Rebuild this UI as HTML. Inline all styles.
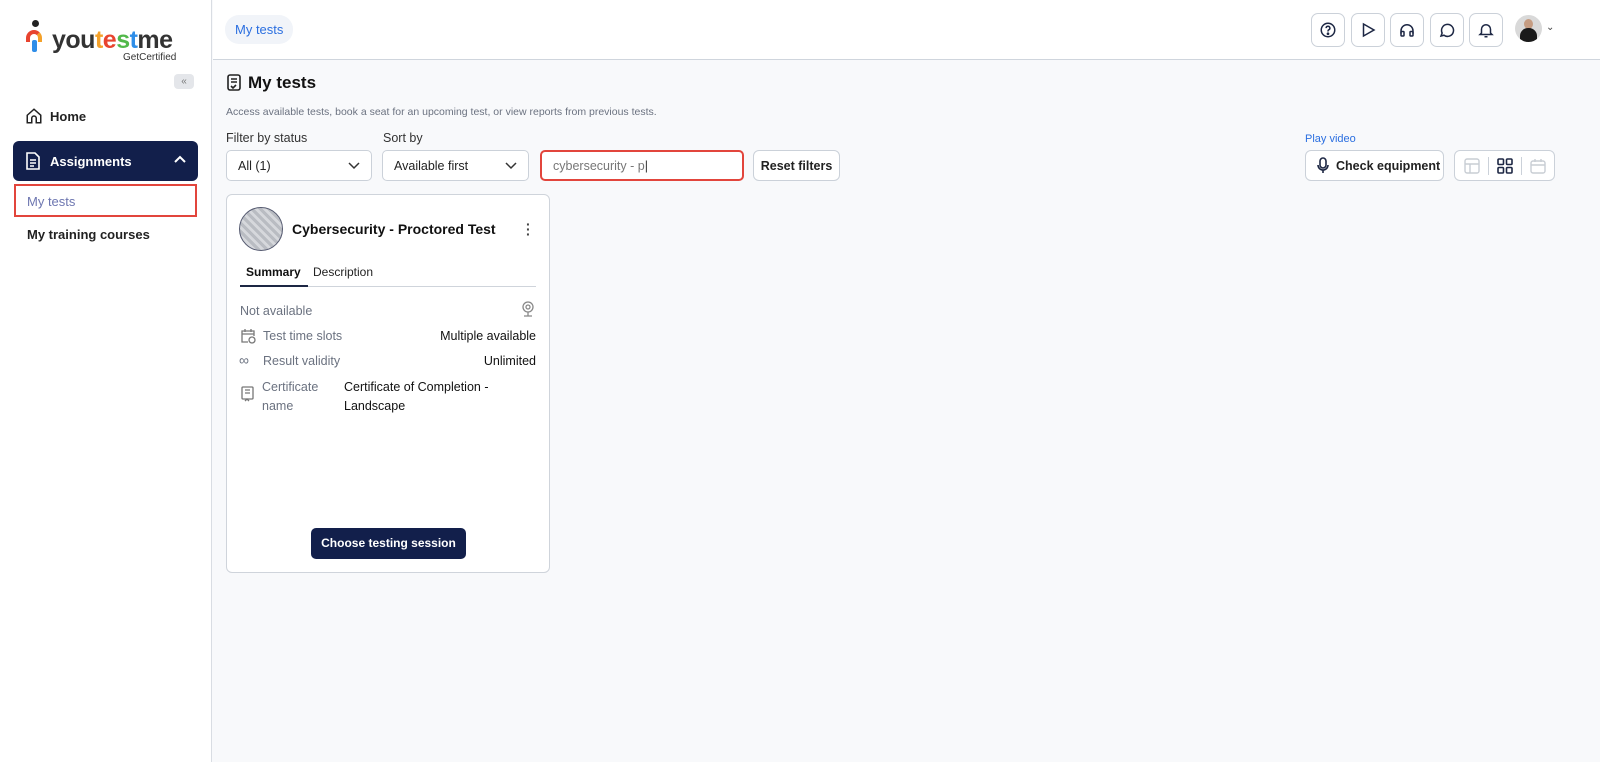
<!DOCTYPE html>
<html><head><meta charset="utf-8"><style>
*{box-sizing:border-box;margin:0;padding:0}
body{width:1600px;height:762px;overflow:hidden;font-family:"Liberation Sans",sans-serif;background:#f8f9fb;color:#111;position:relative}
.side{position:absolute;left:0;top:0;width:212px;height:762px;background:#fff;border-right:1px solid #d9dde3}
.top{position:absolute;left:213px;top:0;right:0;height:60px;background:#fff;border-bottom:1px solid #cfd5dd}
.abs{position:absolute;white-space:nowrap}
.btn{position:absolute;background:#fff;border:1px solid #cbd1d9;border-radius:6px;display:flex;align-items:center;font-size:12.5px;font-weight:bold;color:#222;white-space:nowrap}
.ib{position:absolute;top:13px;width:34px;height:34px;border:1px solid #cbd1d9;border-radius:7px;background:#fff;display:flex;align-items:center;justify-content:center}
svg{display:block}
.lbl{font-size:12.5px;color:#333}
.sel{position:absolute;top:150px;height:31px;background:#fff;border:1px solid #cbd1d9;border-radius:5px;font-size:12.5px;padding:0 11px;display:flex;align-items:center;justify-content:space-between;color:#222;white-space:nowrap}
.row{position:absolute;font-size:12.5px;white-space:nowrap}
.g{color:#6b7280}
</style></head><body>
<div class="side">
  <div class="abs" style="left:26px;top:20px;width:20px;height:30px">
    <div class="abs" style="left:6px;top:0;width:7px;height:7px;border-radius:50%;background:#222"></div>
    <div class="abs" style="left:0;top:10px;width:16px;height:12px;border:4px solid #e8442f;border-bottom:none;border-radius:8px 8px 0 0;border-right-color:#f4a12a"></div>
    <div class="abs" style="left:6px;top:20px;width:5px;height:12px;background:#2f8ee8;border-radius:2px"></div>
  </div>
  <div class="abs" style="left:52px;top:26px;font-size:25px;font-weight:bold;letter-spacing:-0.5px;color:#333">you<span style="color:#f4a12a">t</span><span style="color:#e8442f">e</span><span style="color:#52b84a">s</span><span style="color:#2f8ee8">t</span>me</div>
  <div class="abs" style="left:123px;top:52px;font-size:10px;color:#333">GetCertified</div>
  <div class="abs" style="left:174px;top:74px;width:20px;height:15px;background:#e4e6ea;border-radius:4px;font-size:10px;color:#777;text-align:center;line-height:15px">«</div>
  <svg class="abs" style="left:25px;top:107px" width="18" height="18" viewBox="0 0 24 24" fill="none" stroke="#222" stroke-width="2"><path d="M3 11l9-8 9 8v10h-6v-6a3 3 0 0 0-6 0v6H3z"/></svg>
  <div class="abs" style="left:50px;top:109px;font-size:13px;font-weight:bold;color:#222">Home</div>
  <div class="abs" style="left:13px;top:141px;width:185px;height:40px;background:#121f4b;border-radius:6px">
    <svg class="abs" style="left:12px;top:11px" width="16" height="18" viewBox="0 0 16 18" fill="none" stroke="#fff" stroke-width="1.6"><path d="M2 1h8l4 4v12H2z M5 8h6 M5 11h6 M5 14h4"/></svg>
    <div class="abs" style="left:37px;top:13px;font-size:13px;font-weight:bold;color:#fff">Assignments</div>
    <svg class="abs" style="left:161px;top:14px" width="12" height="10" viewBox="0 0 12 10" fill="none" stroke="#fff" stroke-width="2"><path d="M1 7l5-5 5 5"/></svg>
  </div>
  <div class="abs" style="left:14px;top:184px;width:183px;height:33px;border:2px solid #e2453c"></div>
  <div class="abs" style="left:27px;top:194px;font-size:13px;color:#6d76b0">My tests</div>
  <div class="abs" style="left:27px;top:227px;font-size:13px;font-weight:bold;color:#222">My training courses</div>
</div>
<div class="top">
  <div class="abs" style="left:12px;top:15px;height:29px;padding:0 10px;background:#f1f4f9;border-radius:14px;font-size:13px;color:#2b6fe0;line-height:29px">My tests</div>
  <div class="ib" style="left:1098px"><svg width="18" height="18" viewBox="0 0 24 24" fill="none" stroke="#1d2744" stroke-width="2"><circle cx="12" cy="12" r="9"/><path d="M9.5 9.5a2.5 2.5 0 1 1 3.5 2.3c-.6.3-1 .8-1 1.5V14"/><circle cx="12" cy="17" r=".8" fill="#1d2744"/></svg></div>
  <div class="ib" style="left:1138px"><svg width="18" height="18" viewBox="0 0 24 24" fill="none" stroke="#1d2744" stroke-width="2"><path d="M6 4l14 8-14 8z"/></svg></div>
  <div class="ib" style="left:1177px"><svg width="18" height="18" viewBox="0 0 24 24" fill="none" stroke="#1d2744" stroke-width="2"><path d="M4 17v-4a8 8 0 0 1 16 0v4"/><rect x="4" y="14" width="4" height="6" rx="1"/><rect x="16" y="14" width="4" height="6" rx="1"/></svg></div>
  <div class="ib" style="left:1217px"><svg width="18" height="18" viewBox="0 0 24 24" fill="none" stroke="#1d2744" stroke-width="2"><path d="M4 20l1.5-4A8 8 0 1 1 8 19z"/></svg></div>
  <div class="ib" style="left:1256px"><svg width="18" height="18" viewBox="0 0 24 24" fill="none" stroke="#1d2744" stroke-width="2"><path d="M6 16V11a6 6 0 0 1 12 0v5l2 2H4z M10 21h4"/></svg></div>
  <div class="abs" style="left:1302px;top:15px;width:27px;height:27px;border-radius:50%;overflow:hidden;background:#d9d9d9">
    <div class="abs" style="left:9px;top:4px;width:9px;height:10px;border-radius:50%;background:#c59c82"></div>
    <div class="abs" style="left:5px;top:13px;width:17px;height:16px;border-radius:8px 8px 0 0;background:#1a1a1a"></div>
  </div>
  <div class="abs" style="left:1333px;top:22px;font-size:10px;color:#444">⌄</div>
</div>
<svg class="abs" style="left:227px;top:74px" width="14" height="17" viewBox="0 0 14 17" fill="none" stroke="#222" stroke-width="1.6"><rect x="1" y="1" width="12" height="15" rx="2"/><path d="M4 5h6 M4 8h6 M4 12l2 2 3-3"/></svg>
<div class="abs" style="left:248px;top:73px;font-size:17px;font-weight:bold;color:#111">My tests</div>
<div class="abs" style="left:226px;top:106px;font-size:10.5px;color:#6b7280">Access available tests, book a seat for an upcoming test, or view reports from previous tests.</div>
<div class="abs lbl" style="left:226px;top:131px">Filter by status</div>
<div class="abs lbl" style="left:383px;top:131px">Sort by</div>
<div class="sel" style="left:226px;width:146px">All (1)<svg width="12" height="8" viewBox="0 0 12 8" fill="none" stroke="#333" stroke-width="1.5"><path d="M1 1l5 5 5-5"/></svg></div>
<div class="sel" style="left:382px;width:147px">Available first<svg width="12" height="8" viewBox="0 0 12 8" fill="none" stroke="#333" stroke-width="1.5"><path d="M1 1l5 5 5-5"/></svg></div>
<div class="sel" style="left:540px;width:204px;border:2px solid #e2453c;color:#777;justify-content:flex-start">cybersecurity - p<span style="color:#333">|</span></div>
<div class="btn" style="left:753px;top:150px;width:87px;height:31px;justify-content:center">Reset filters</div>
<div class="abs" style="left:1305px;top:133px;font-size:11px;color:#2b6fe0">Play video</div>
<div class="btn" style="left:1305px;top:150px;width:139px;height:31px;padding-left:11px;gap:7px"><svg width="12" height="17" viewBox="0 0 12 17" fill="none" stroke="#1d2744" stroke-width="1.6"><rect x="3" y="1" width="6" height="10" rx="3"/><path d="M1 8a5 5 0 0 0 10 0 M6 13v3"/></svg>Check equipment</div>
<div class="btn" style="left:1454px;top:150px;width:101px;height:31px">
  <svg class="abs" style="left:9px;top:7px" width="16" height="16" viewBox="0 0 16 16" fill="none" stroke="#c8cdd4" stroke-width="1.4"><rect x="1" y="1" width="14" height="14" rx="2"/><path d="M1 6h14 M6 6v9"/></svg>
  <div class="abs" style="left:33px;top:6px;width:1px;height:18px;background:#cbd1d9"></div>
  <svg class="abs" style="left:42px;top:7px" width="16" height="16" viewBox="0 0 16 16" fill="none" stroke="#1d2744" stroke-width="1.6"><rect x="1" y="1" width="5.5" height="5.5" rx="1"/><rect x="9.5" y="1" width="5.5" height="5.5" rx="1"/><rect x="1" y="9.5" width="5.5" height="5.5" rx="1"/><rect x="9.5" y="9.5" width="5.5" height="5.5" rx="1"/></svg>
  <div class="abs" style="left:66px;top:6px;width:1px;height:18px;background:#cbd1d9"></div>
  <svg class="abs" style="left:75px;top:7px" width="16" height="16" viewBox="0 0 16 16" fill="none" stroke="#c8cdd4" stroke-width="1.4"><rect x="1" y="3" width="14" height="12" rx="2"/><path d="M1 7h14 M5 1v3 M11 1v3"/></svg>
</div>
<div class="abs" style="left:226px;top:194px;width:324px;height:379px;background:#fff;border:1px solid #cfd4db;border-radius:6px">
  <div class="abs" style="left:12px;top:12px;width:44px;height:44px;border-radius:50%;border:1.5px solid #555a70;background:repeating-linear-gradient(45deg,#b9bcc2 0 3px,#d6d8dc 3px 6px)"></div>
  <div class="abs" style="left:65px;top:26px;font-size:14px;font-weight:bold">Cybersecurity - Proctored Test</div>
  <div class="abs" style="left:299px;top:27px;font-size:14px;font-weight:bold;color:#444;line-height:5px">·<br>·<br>·</div>
  <div class="abs" style="left:19px;top:70px;font-size:12px;font-weight:bold">Summary</div>
  <div class="abs" style="left:86px;top:70px;font-size:12px;color:#222">Description</div>
  <div class="abs" style="left:13px;top:91px;width:296px;height:1px;background:#cfd4db"></div>
  <div class="abs" style="left:13px;top:90px;width:68px;height:2px;background:#1d2744"></div>
  <div class="row g" style="left:13px;top:109px">Not available</div>
  <svg class="abs" style="left:294px;top:106px" width="14" height="16" viewBox="0 0 14 16" fill="none" stroke="#888" stroke-width="1.3"><circle cx="7" cy="6" r="5"/><circle cx="7" cy="6" r="2"/><path d="M3 15h8 M7 11v4"/></svg>
  <svg class="abs" style="left:13px;top:133px" width="16" height="16" viewBox="0 0 16 16" fill="none" stroke="#777" stroke-width="1.3"><path d="M8 14H2V3h12v5 M2 6h12 M5 1v3 M11 1v3"/><circle cx="12" cy="12" r="3"/></svg>
  <div class="row g" style="left:36px;top:134px">Test time slots</div>
  <div class="row" style="right:13px;top:134px">Multiple available</div>
  <div class="row g" style="left:12px;top:157px;font-size:14px">∞</div>
  <div class="row g" style="left:36px;top:159px">Result validity</div>
  <div class="row" style="right:13px;top:159px">Unlimited</div>
  <svg class="abs" style="left:14px;top:191px" width="13" height="17" viewBox="0 0 13 17" fill="none" stroke="#777" stroke-width="1.3"><rect x="1" y="1" width="11" height="12" rx="1"/><path d="M4 4h5 M4 7h5 M4 15l2-2 2 2"/></svg>
  <div class="row g" style="left:35px;top:183px;line-height:19px">Certificate<br>name</div>
  <div class="row" style="left:117px;top:183px;line-height:19px">Certificate of Completion -<br>Landscape</div>
  <div class="abs" style="left:84px;top:333px;width:155px;height:31px;background:#121f4b;color:#fff;border-radius:5px;font-size:12px;font-weight:bold;text-align:center;line-height:31px">Choose testing session</div>
</div>
</body></html>
